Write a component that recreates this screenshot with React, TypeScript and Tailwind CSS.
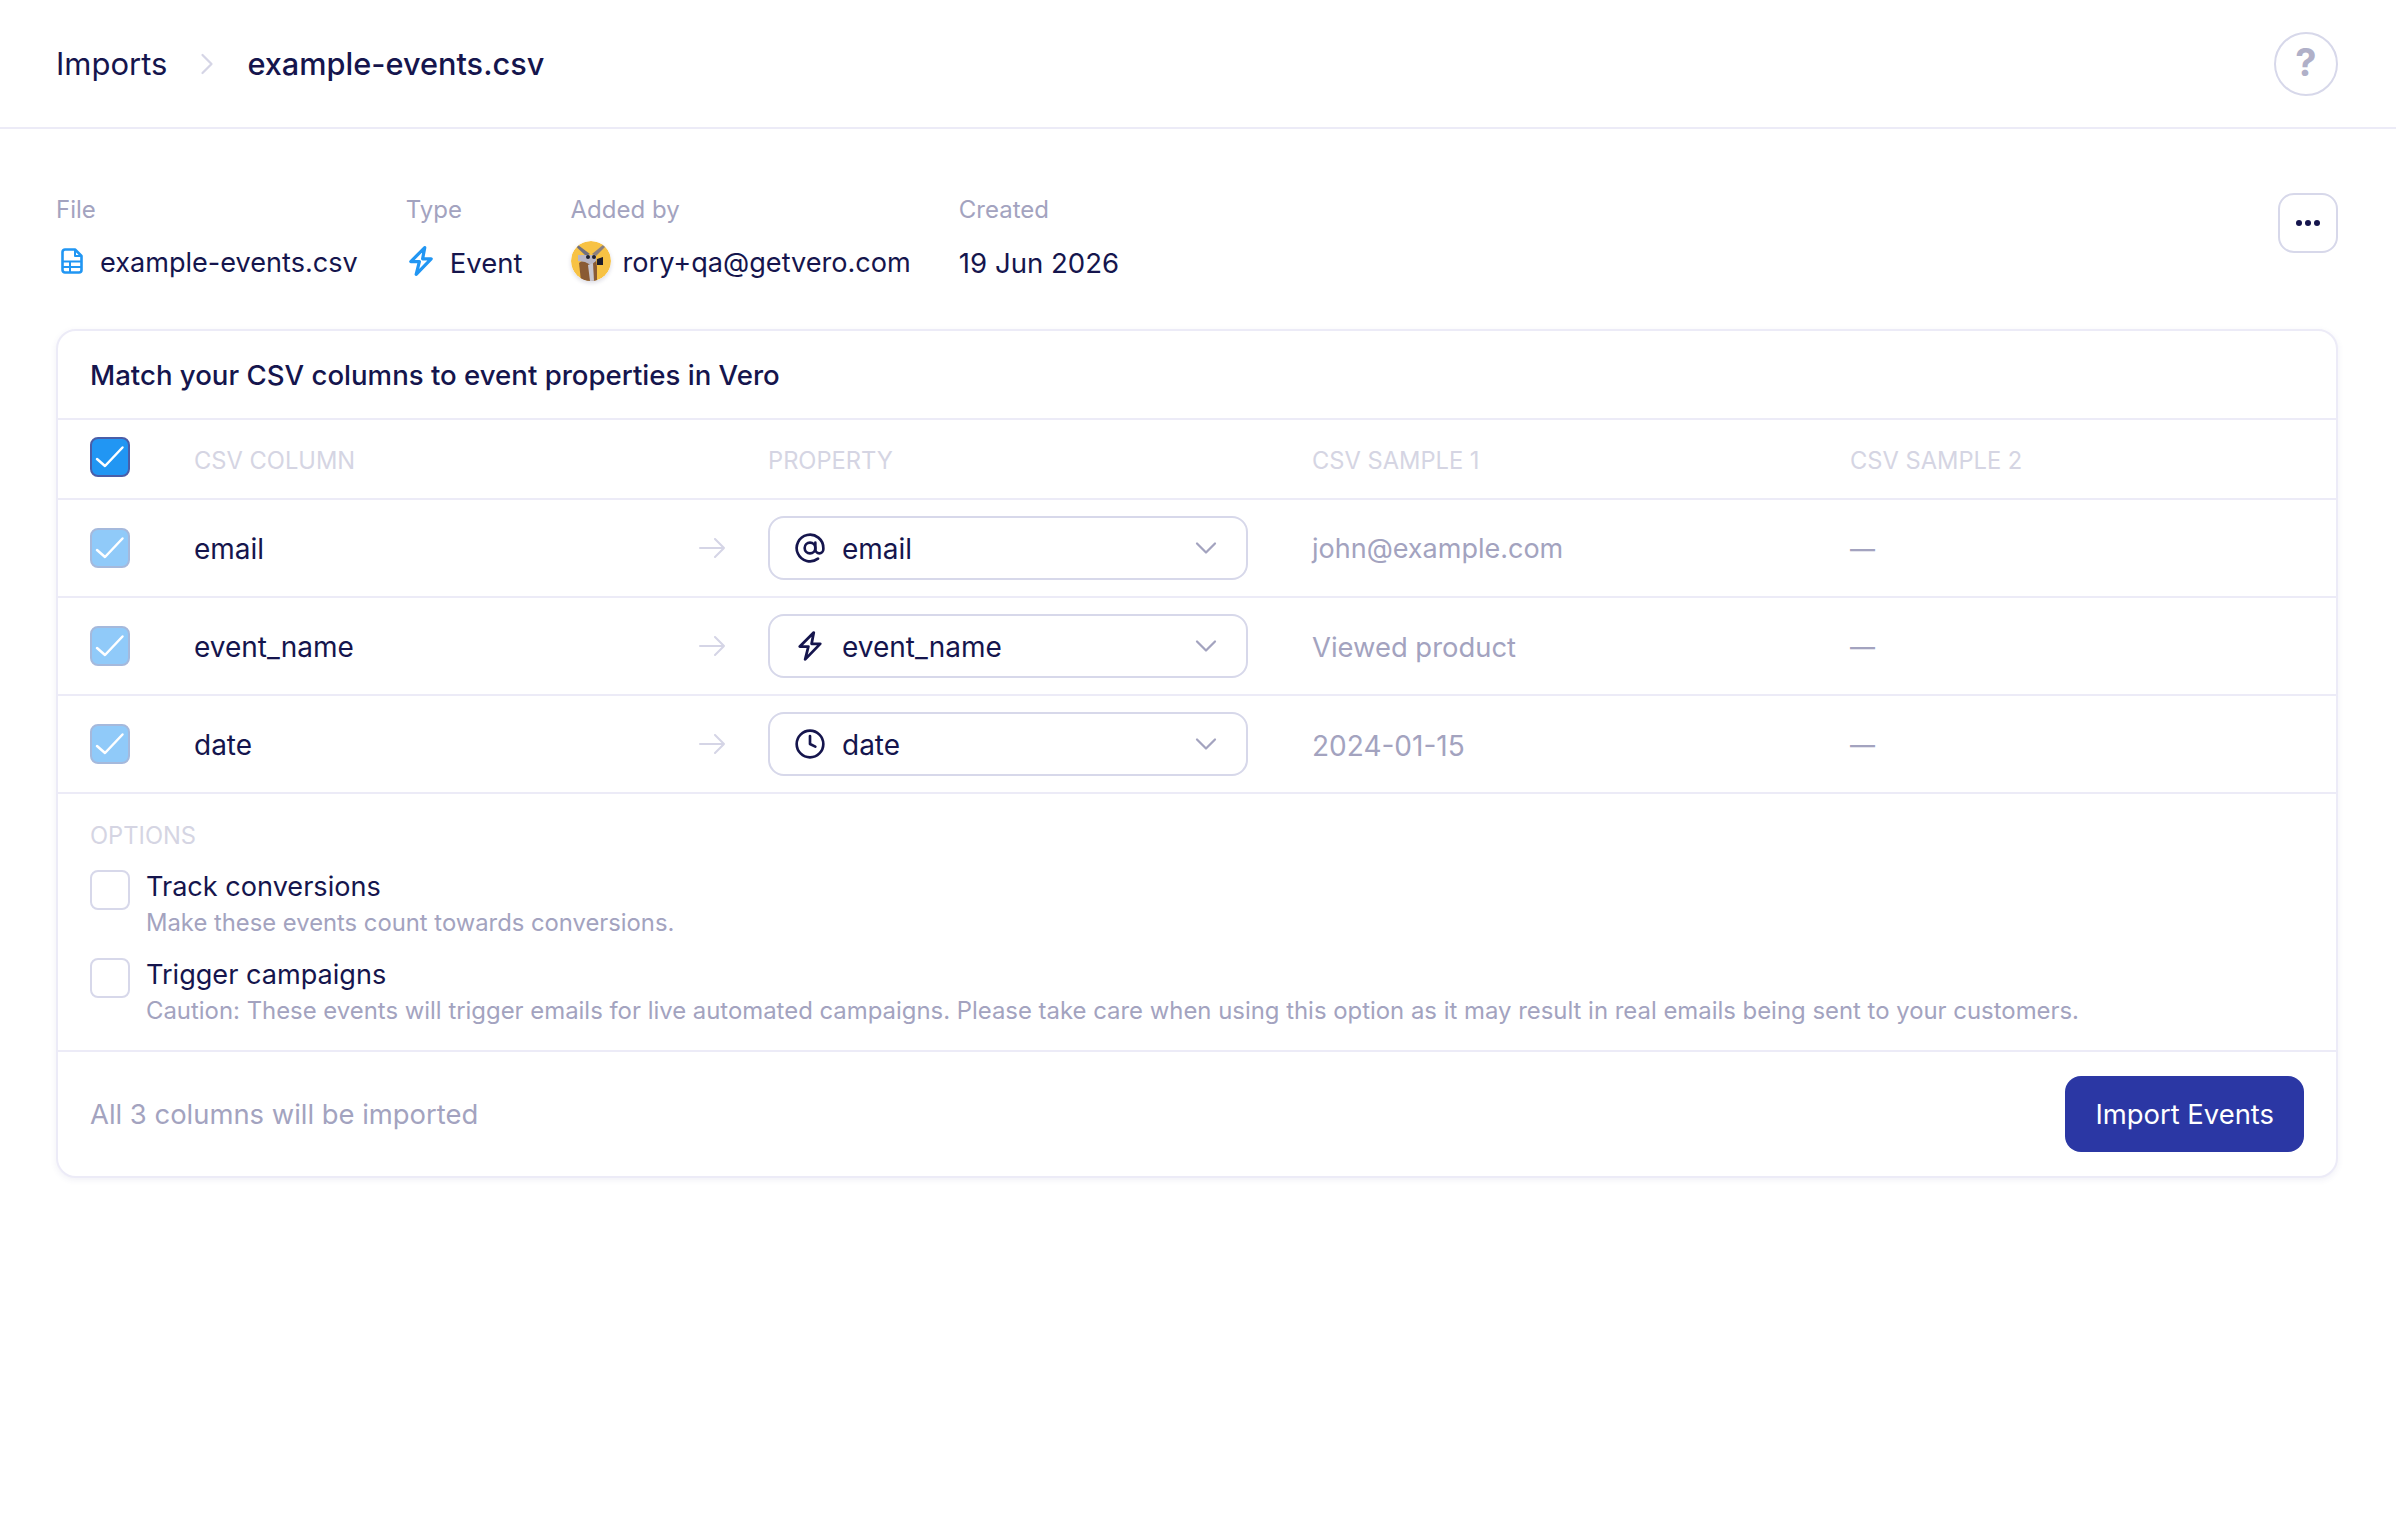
import React from "react";
import { AtSign, ChevronDown, ChevronRight, Clock } from "lucide-react";

const Check = () => (
  <svg viewBox="0 0 36 36" className="h-full w-full" fill="none" stroke="white" strokeWidth="2.5" strokeLinecap="round" strokeLinejoin="round">
    <path d="M5 20 L13 27 L30.5 8.5" />
  </svg>
);

const Bolt = ({ className = "", width = 3 }: { className?: string; width?: number }) => (
  <svg viewBox="1 1 22 28" className={className} fill="none" stroke="currentColor" strokeWidth={width} strokeLinecap="round" strokeLinejoin="round">
    <path d="M15.5 2.5 L2.5 15.5 H10.5 L7.5 27.5 L21.5 13 H13.5 Z" />
  </svg>
);

const FileSheet = () => (
  <svg viewBox="0 0 22 26" className="h-[26px] w-[22px]" fill="none" stroke="#2196f3" strokeWidth="2.6" strokeLinejoin="round">
    <path d="M1.5 4 a2.5 2.5 0 0 1 2.5-2.5 H14 L20.5 8 V22 a2.5 2.5 0 0 1-2.5 2.5 H4 a2.5 2.5 0 0 1-2.5-2.5 Z" />
    <path d="M14 1.5 V8 H20.5" strokeWidth="2" />
    <path d="M1.5 13.5 H20.5 M1.5 19 H20.5 M9 13.5 V24.5" strokeWidth="2" />
  </svg>
);

const Avatar = () => (
  <svg viewBox="0 0 40 40" className="h-10 w-10 shrink-0 rounded-full shadow-[0_2px_4px_rgba(20,20,75,0.15)]">
    <circle cx="20" cy="20" r="20" fill="#f7c244" />
    <path d="M19 13 L7 4 L6 6.5 L15 15 Z" fill="#6f6f80" />
    <path d="M21 13 L32 4 L34 6 L25 15 Z" fill="#8a7f80" />
    <path d="M10 40 L8 22 L15 17 H25 L26 26 L26 40 Z" fill="#8a5a34" />
    <path d="M7 14 H25 L25 20 L20 24 L14 21 L7 20 Z" fill="#b9b6c4" />
    <path d="M17 24 L22 22 L23 40 H19 Z" fill="#c9c7d2" />
    <circle cx="17" cy="16" r="2" fill="#20202c" />
    <circle cx="23" cy="16" r="2" fill="#20202c" />
    <path d="M26 18 L32 16 L32 24 L26 24 Z" fill="#1c1c2c" />
  </svg>
);

const Arrow = () => (
  <svg viewBox="0 0 26 20" className="h-5 w-[26px]" fill="none" stroke="#d5d5e6" strokeWidth="2" strokeLinecap="round" strokeLinejoin="round">
    <path d="M1 10 H25 M16 1 L25 10 L16 19" />
  </svg>
);

const rows = [
  { name: "email", icon: <AtSign className="h-8 w-8" strokeWidth={2} />, sample: "john@example.com", sampleClass: "text-[27px]" },
  { name: "event_name", icon: <Bolt className="h-[30px] w-6" width={2.6} />, sample: "Viewed product", sampleClass: "text-[27.4px]" },
  { name: "date", icon: <Clock className="h-8 w-8" strokeWidth={2} />, sample: "2024-01-15", sampleClass: "text-[28px]" },
];

const grid = "grid grid-cols-[104px_505px_69px_544px_538px_1fr] items-center px-8";
const th = "pt-[3px] text-[23.7px] leading-8 text-[#d5d5e3]";
const metaLabel = "pt-[2px] text-[24px] leading-[30px] text-[#a3a3bf]";

export default function App() {
  return (
    <div className="min-h-[1528px] bg-white font-['Inter',sans-serif] text-[#15154d]">
      <header className="flex h-[129px] items-center justify-between border-b-2 border-[#ecebf7] pl-14 pr-[58px]">
        <nav className="flex items-center whitespace-nowrap text-[31px] leading-10">
          <span>Imports</span>
          <ChevronRight className="ml-[22px] mr-[22px] h-9 w-9 text-[#d5d5e6]" strokeWidth={1.5} />
          <span className="text-[30.7px] font-medium">example-events.csv</span>
        </nav>
        <button className="flex h-16 w-16 items-center justify-center rounded-full border-2 border-[#d7d8ea] bg-white pb-[3px] text-[38px] font-bold text-[#b0b0c8]">
          ?
        </button>
      </header>

      <main className="pl-14 pr-[58px]">
        <section className="flex h-[200px] items-start justify-between pt-[64px]">
          <div className="flex gap-12 whitespace-nowrap leading-10">
            <div>
              <div className={metaLabel}>File</div>
              <div className="mt-4 flex h-10 items-center gap-3">
                <span className="flex w-8 justify-center"><FileSheet /></span>
                <span className="pt-[3px] text-[27.1px]">example-events.csv</span>
              </div>
            </div>
            <div>
              <div className={metaLabel}>Type</div>
              <div className="mt-4 flex h-10 items-center gap-3">
                <span className="flex w-8 justify-start pl-[3px] text-[#2196f3]"><Bolt className="h-[30px] w-6" /></span>
                <span className="pt-[3px] text-[27.5px]">Event</span>
              </div>
            </div>
            <div>
              <div className={metaLabel}>Added by</div>
              <div className="mt-4 flex h-10 items-center gap-3">
                <Avatar />
                <span className="pt-[3px] text-[27.1px]">rory+qa@getvero.com</span>
              </div>
            </div>
            <div>
              <div className={metaLabel}>Created</div>
              <div className="mt-4 flex h-10 items-center text-[27.6px]"><span className="pt-[3px]">19 Jun 2026</span></div>
            </div>
          </div>
          <button className="flex h-[60px] w-[60px] items-center justify-center rounded-2xl border-2 border-[#d7d8ea] bg-white">
            <svg viewBox="0 0 24 6" className="h-1.5 w-6" fill="#15154d">
              <circle cx="3" cy="3" r="3" />
              <circle cx="12" cy="3" r="3" />
              <circle cx="21" cy="3" r="3" />
            </svg>
          </button>
        </section>

        <section className="rounded-[20px] border-2 border-[#ecebf7] bg-white shadow-[0_2px_6px_rgba(60,60,140,0.08)]">
          <div className="flex h-[89px] items-center border-b-2 border-[#ecebf7] px-8 pt-[3px] text-[27.6px] font-medium">
            Match your CSV columns to event properties in Vero
          </div>

          <div className={`${grid} h-20 border-b-2 border-[#ecebf7]`}>
            <span className="-mt-1 flex h-10 w-10 items-center justify-center rounded-lg border-2 border-[#4a5ea8] bg-[#2196f3]"><Check /></span>
            <span className={th}>CSV COLUMN</span>
            <span />
            <span className={th}>PROPERTY</span>
            <span className={th}>CSV SAMPLE 1</span>
            <span className={th}>CSV SAMPLE 2</span>
          </div>

          {rows.map((r) => (
            <div key={r.name} className={`${grid} h-[98px] border-b-2 border-[#ecebf7] text-[28px]`}>
              <span className="flex h-10 w-10 items-center justify-center rounded-lg border-2 border-[#a5b9dc] bg-[#90caf9]"><Check /></span>
              <span className="pt-[2px]">{r.name}</span>
              <Arrow />
              <div className="flex h-[64px] w-[480px] items-center rounded-2xl border-2 border-[#d7d8ea] bg-white pl-6 pr-[22px]">
                <span className="flex w-8 justify-center">{r.icon}</span>
                <span className="ml-4 flex-1 pt-[2px]">{r.name}</span>
                <ChevronDown className="h-9 w-9 text-[#a3a3bf]" strokeWidth={1.5} />
              </div>
              <span className={`pt-[3px] text-[#a3a3bf] ${r.sampleClass}`}>{r.sample}</span>
              <span className="pt-[3px] text-[25px] font-medium text-[#a3a3bf]">—</span>
            </div>
          ))}

          <div className="border-b-2 border-[#ecebf7] px-8 pb-[20px] pt-[23px]">
            <div className={th}>OPTIONS</div>
            <div className="mt-[18px] flex flex-col gap-4">
              <label className="flex gap-4">
                <span className="block h-10 w-10 shrink-0 rounded-lg border-2 border-[#d7d8ea] bg-white" />
                <span>
                  <span className="block text-[27.1px] leading-[34px]">Track conversions</span>
                  <span className="block text-[23.8px] leading-[38px] text-[#a3a3bf]">Make these events count towards conversions.</span>
                </span>
              </label>
              <label className="flex gap-4">
                <span className="block h-10 w-10 shrink-0 rounded-lg border-2 border-[#d7d8ea] bg-white" />
                <span>
                  <span className="block text-[27.1px] leading-[34px]">Trigger campaigns</span>
                  <span className="block text-[23.9px] leading-[38px] text-[#a3a3bf]">Caution: These events will trigger emails for live automated campaigns. Please take care when using this option as it may result in real emails being sent to your customers.</span>
                </span>
              </label>
            </div>
          </div>

          <div className="flex h-[124px] items-center justify-between px-8">
            <span className="pt-[2px] text-[27.4px] text-[#a3a3bf]">All 3 columns will be imported</span>
            <button className="flex h-[76px] items-center rounded-2xl bg-[#2b37a4] px-[30px] pt-[2px] text-[27.4px] text-white">
              Import Events
            </button>
          </div>
        </section>
      </main>
    </div>
  );
}
